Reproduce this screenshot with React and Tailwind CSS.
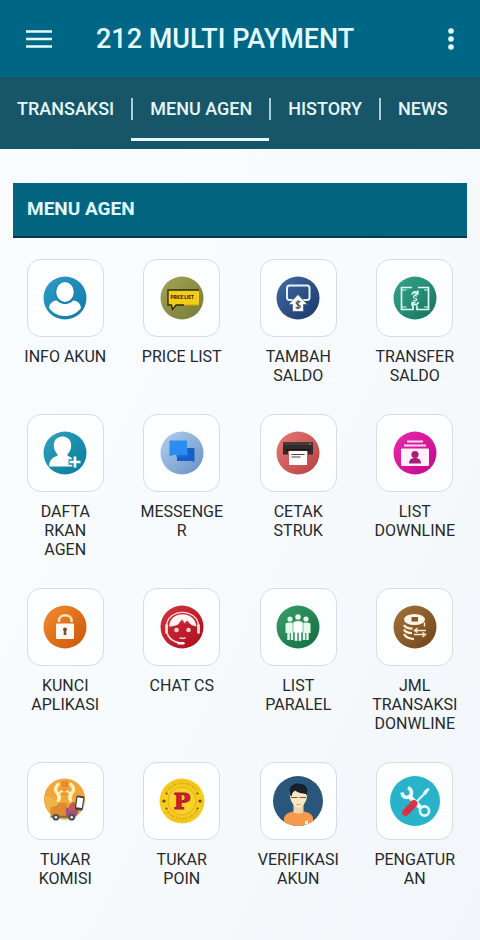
import React, { useState } from "react";

const tabs = ["TRANSAKSI", "MENU AGEN", "HISTORY", "NEWS"];

function Disc({ id, from, to, children }) {
  return (
    <svg viewBox="0 0 44 44" className="w-11 h-11" aria-hidden="true">
      <defs>
        <linearGradient id={id} x1="0" y1="0" x2="1" y2="1">
          <stop offset="0" stopColor={from} />
          <stop offset="1" stopColor={to} />
        </linearGradient>
      </defs>
      <circle cx="22" cy="22" r="21.5" fill={`url(#${id})`} />
      {children}
    </svg>
  );
}

function InfoIcon() {
  return (
    <Disc id="info" from="#2f9cc4" to="#0b7ba9">
      <path
        d="M6 32c.4-5 4.300-7.500 8-7.500 3.500 4.200 12.500 4.200 16 0 4 0 7.600 2.800 8 7.500-4 5.500-10 8-16 8S10 37.500 6 32z"
        fill="#fff"
      />
      <ellipse cx="22" cy="16.800" rx="9.800" ry="11.300" fill="#1480ab" />
      <ellipse cx="22" cy="16" rx="8.800" ry="10" fill="#fff" />
    </Disc>
  );
}

function PriceIcon() {
  return (
    <Disc id="price" from="#a3a552" to="#77793a">
      <path d="M8 14h31v15H16l-3.500 4.500L11.500 29H8z" fill="#f2cf16" />
      <path d="M39 14H8v15h3.500l1 4.500L16 29h8" fill="none" stroke="#2c2a0c" strokeWidth="1.300" />
      <path d="M24 29h15" stroke="#d2a512" strokeWidth="1" />
      <text x="10.500" y="23" fontFamily="Roboto, sans-serif" fontSize="4.500" fontWeight="900" fill="#38200c">
        PRICE LIST
      </text>
    </Disc>
  );
}

function TopUpIcon() {
  return (
    <Disc id="topup" from="#426aa3" to="#1c3768">
      <rect x="11" y="9.500" width="22.500" height="14.500" rx="2.500" fill="none" stroke="#e6f3fb" strokeWidth="2" />
      <path d="M22 18.500l9.500 10H27.500v7H16.500v-7h-4z" fill="#f4fbff" stroke="#2b4c80" strokeWidth=".6" />
      <path
        d="M24.300 26.200c-.6-1-4.200-1.200-4.200.8 0 2.200 4.200 1.200 4.200 3.500 0 2-3.600 2-4.500.6M22.100 24.200v9"
        fill="none"
        stroke="#4a4a3e"
        strokeWidth="1.200"
      />
    </Disc>
  );
}

function TransferIcon() {
  return (
    <Disc id="transfer" from="#36a58b" to="#16735f">
      <g fill="none" stroke="#dffaf2" strokeWidth="1.700">
        <path d="M19 11.500H8.500v22H20v-4" />
        <path d="M25 11.500h10.500v22H24v-4" />
        <path d="M8.500 14h5M31 14h4.500M8.500 31h5M31 31h4.500" strokeWidth="1" />
        <path d="M19 18.500c1-3 4-3.500 5.500-1.500M24.800 14.500v3.500h-3.300" />
        <path d="M25.500 26c-1 3-4 3.500-5.500 1.500M19.200 30v-3.500h3.300" />
        <path d="M24 20.300c-1-1-3.800-.8-3.600.7.200 1.700 3.500.8 3.500 2.500 0 1.400-2.900 1.400-3.700.4" strokeWidth="1.200" />
      </g>
    </Disc>
  );
}

function RegisterIcon() {
  return (
    <Disc id="register" from="#2fa3c0" to="#08799a">
      <path
        d="M19.500 5.500c5.300 0 8.700 3.800 8.700 9 0 3.800-1.600 6.600-3.600 8.500v2c4.600 1.600 7.400 3.500 7.900 10.500H6c.4-7 3.300-8.900 8.400-10.500v-2c-2-1.900-3.600-4.700-3.600-8.500 0-5.200 3.400-9 8.700-9z"
        fill="#fff"
      />
      <path d="M32 24.500v13M25.500 31h13" stroke="#108aab" strokeWidth="5.500" />
      <path d="M32 25.500v11M26.500 31h11" stroke="#fff" strokeWidth="2.600" />
    </Disc>
  );
}

function MessengerIcon() {
  return (
    <Disc id="messenger" from="#b4d2f0" to="#668fc3">
      <path d="M17 17h17.500v14l-3-1H17z" fill="#155fc7" />
      <path d="M9.500 9.500H27V24H13l-3.500 1.500z" fill="#2b8df0" />
      <path d="M16.500 24H27v-6l1.500 1v7H16.500z" fill="#1b6fdb" />
    </Disc>
  );
}

function PrintIcon() {
  return (
    <Disc id="print" from="#e87a75" to="#b63f42">
      <path d="M7 11h30v12.500h-5V19H12v4.500H7z" fill="#302a2b" />
      <path d="M7 11h30v3H7z" fill="#453b3c" />
      <path d="M33.500 11.500l2 1.500-2 1.500z" fill="#c65658" />
      <path d="M10 19h24" stroke="#15100f" strokeWidth="1.500" />
      <path d="M13 20h18v14H13z" fill="#fdfbfa" />
      <path d="M15.500 23.500h13M15.500 26h9" stroke="#4d4646" strokeWidth="1" />
    </Disc>
  );
}

function DownlineIcon() {
  return (
    <Disc id="downline" from="#e62baa" to="#c5068e">
      <path d="M14 10.500h16M11 14.500h22" stroke="#ffd9f2" strokeWidth="1.800" />
      <rect x="8" y="17.500" width="28" height="17.500" rx="1" fill="#fff1fa" />
      <circle cx="22" cy="23.500" r="3.600" fill="#a81c7c" />
      <path d="M16 32.500c0-4 2.500-5.500 6-5.500s6 1.500 6 5.500z" fill="#a81c7c" />
    </Disc>
  );
}

function LockIcon() {
  return (
    <Disc id="lock" from="#f28c30" to="#cc5507">
      <path d="M16 17v-1.500c0-7 12.500-7 12.500 0V17" fill="none" stroke="#ffe0b8" strokeWidth="2.600" />
      <rect x="13" y="18.500" width="18" height="15.500" rx="1" fill="#fffaf2" />
      <circle cx="22" cy="24.500" r="2" fill="#7d4b30" />
      <path d="M21 25h2l.4 5h-2.800z" fill="#7d4b30" />
    </Disc>
  );
}

function ChatCsIcon() {
  return (
    <Disc id="cs" from="#d23440" to="#ae0c1a">
      <path d="M6.500 22C6.500 2.500 38.500 2.500 38.500 22" fill="none" stroke="#ffdcdc" strokeWidth="1.400" />
      <path d="M9 21.500C10 5 35 5 36.500 21.500c-4.500-.5-7-2.500-8.800-5.500l-3.200 2.500-2.500-3-4 4c-3 1.500-6 2-9 2z" fill="#fff4f2" />
      <path d="M19 18l3-3.500 2.500 3.500 3-2.500 1 3.500z" fill="#cf2c35" />
      <path d="M6.500 20.500v7M38.500 20.500v7" stroke="#ffe0dd" strokeWidth="2.800" strokeLinecap="round" />
      <path d="M7 28c1.500 5.500 7 9 13.500 10" fill="none" stroke="#ffd9d7" strokeWidth="1.700" />
      <path d="M18.500 38.300h5" stroke="#fff" strokeWidth="2.400" strokeLinecap="round" />
      <circle cx="16.500" cy="25" r="2.300" fill="#ffd2cf" />
      <circle cx="28.500" cy="25" r="2.300" fill="#ffd2cf" />
      <path d="M19.500 32.800c2 .8 4 .8 6 0" fill="none" stroke="#ffc0bd" strokeWidth="1.700" />
    </Disc>
  );
}

function ParallelIcon() {
  return (
    <Disc id="parallel" from="#39a06c" to="#126b3d">
      <g fill="#e3fbea">
        <circle cx="14" cy="14" r="2.600" />
        <path d="M9.500 19c0-2 9-2 9 0v9h-1.300v7h-2.400v-7h-1v7h-2.500v-7H9.500z" />
        <circle cx="30" cy="14" r="2.600" />
        <path d="M25.500 19c0-2 9-2 9 0v9h-1.800v7h-2.400v-7h-1v7h-2.500v-7h-1.300z" />
      </g>
      <g fill="#fff" stroke="#3d9c6a" strokeWidth=".6">
        <circle cx="22" cy="12" r="3" />
        <path d="M17 18c0-3 10-3 10 0v9.500h-1.500V36h-3v-8h-1v8h-3v-8.500H17z" />
      </g>
    </Disc>
  );
}

function CoinsIcon() {
  return (
    <Disc id="coins" from="#a5733c" to="#6f431a">
      <ellipse cx="21.500" cy="14.500" rx="10.500" ry="5.500" fill="#fff5e5" />
      <rect x="18.500" y="12" width="6.500" height="4.500" fill="#7f5a34" />
      <g fill="none" stroke="#fff0dc" strokeWidth="2.200">
        <path d="M11 20c1 2.500 4 3.500 8.500 3.700" />
        <path d="M11 24.500c1 2.500 4 3.500 8 3.700" />
        <path d="M11 29c1.500 3 5 4.700 10 5" />
      </g>
      <path d="M31.500 17.500v4" stroke="#fff0dc" strokeWidth="1.500" />
      <path d="M22 25.500h11M21 29.500h10M24.500 23l-3 2.500 3 2M29.500 27.500l3 2-3 2.500" fill="none" stroke="#ffe8cb" strokeWidth="1.500" />
    </Disc>
  );
}

function KomisiIcon() {
  return (
    <svg viewBox="0 0 46 48" className="w-11 h-12" aria-hidden="true">
      <circle cx="22.500" cy="22" r="21.500" fill="#f3a53c" />
      <path d="M2 18c7 2 13 5 14 12l1 12C8 39 1 31 2 18z" fill="#efb646" />
      <g fill="none" stroke="#fff2bd" strokeWidth="3.600" strokeLinecap="round">
        <path d="M16 6.500c-4 3.500-3.500 7-.5 10 2.500 3 1.500 5.500.5 7" />
        <path d="M29 6.500c4 3.500 3.500 7 .5 10-2.500 3-1.500 5.500-.5 7" />
        <path d="M15.500 16.500l4.500-3M29.500 16.500l-4.500-3" strokeWidth="2" />
      </g>
      <path d="M20 4h5.500v5H20zM19.500 12h6M20.500 17h4" fill="#e58f31" stroke="#d98024" strokeWidth="1" />
      <path d="M8 31l8-3v-2h9v14H8z" fill="#dd8a30" />
      <path d="M24 31h14l-3 9H24z" fill="#a4517b" />
      <path d="M27 29l4-4 5 2-1 7h-8z" fill="#bd5e56" />
      <rect x="34" y="18.500" width="8.500" height="15" rx="1.500" transform="rotate(8 38 26)" fill="#42414b" />
      <rect x="35.300" y="20.500" width="6" height="10.500" transform="rotate(8 38 26)" fill="#fff" />
      <path d="M8 40.500h26" stroke="#716a67" strokeWidth="2" />
      <circle cx="13.500" cy="41" r="3.500" fill="#494a4e" />
      <circle cx="13.500" cy="41" r="1.500" fill="#ddd" />
      <circle cx="30" cy="41" r="3.500" fill="#494a4e" />
      <circle cx="30" cy="41" r="1.500" fill="#ddd" />
    </svg>
  );
}

function PoinIcon() {
  return (
    <svg viewBox="0 0 46 46" className="w-[46px] h-[46px]" aria-hidden="true">
      <circle cx="23" cy="23" r="22.500" fill="#f7cd1f" />
      <circle cx="23" cy="23" r="17.800" fill="none" stroke="#dcae1b" strokeWidth="2.400" strokeDasharray="1.500 1.500 2.500 1" />
      <circle cx="23" cy="23" r="20.500" fill="none" stroke="#edb90e" strokeWidth=".8" />
      <circle cx="23" cy="23" r="14" fill="#f9d22a" stroke="#d8a514" strokeWidth=".8" />
      <path d="M5.500 13v20M40.500 13v20" stroke="#f7cd1f" strokeWidth="5" />
      <g fill="#6e3d14">
        <circle cx="5" cy="23" r="1.600" />
        <circle cx="41" cy="23" r="1.600" />
        <circle cx="7.500" cy="15.500" r="1" />
        <circle cx="38.500" cy="15.500" r="1" />
        <circle cx="7.500" cy="30.500" r="1" />
        <circle cx="38.500" cy="30.500" r="1" />
      </g>
      <text
        x="23"
        y="30.500"
        textAnchor="middle"
        fontFamily="DejaVu Serif, serif"
        fontSize="22"
        fontWeight="700"
        fill="#d11f2b"
        stroke="#b0222a"
        strokeWidth="1.200"
      >
        P
      </text>
    </svg>
  );
}

function VerifikasiIcon() {
  return (
    <svg viewBox="0 0 52 52" className="w-13 h-13" aria-hidden="true">
      <clipPath id="face">
        <circle cx="26" cy="26" r="25" />
      </clipPath>
      <circle cx="26" cy="26" r="25" fill="#2a567b" />
      <g clipPath="url(#face)">
        <path d="M12 52V43c1-4 4-5.500 9-6.500h11c5 1 8 2.500 9 6.500v9z" fill="#f5994a" />
        <path d="M21.500 29h10v7.500c-1 3-9 3-10 0z" fill="#efd5ae" />
        <path d="M17.500 18c0-4 4-7 9-7s9 3 9 7l-1 6c-1 4-4.500 9-8 9s-7-5-8-9z" fill="#fbe6c4" />
        <path d="M17.500 18C17 11 21 8.500 26 8.500c7 0 10.500 4 9.500 10.500l-1.500 1.500V19c-4-.5-8-1-11-3.500-1.500 1.500-2.500 2-3 3.500v2c-1.500 0-2.300-1-2.500-3z" fill="#15202c" />
        <path d="M19 22.500h6M28 22.500h6" stroke="#6a5a48" strokeWidth="1.200" />
        <path d="M25 22.500h3M24.500 29.500h4" stroke="#c79b74" strokeWidth=".8" />
        <path d="M33 46.500l3-1.500v4.500h-3z" fill="#fff1d2" />
      </g>
    </svg>
  );
}

function ToolsIcon() {
  return (
    <svg viewBox="0 0 52 52" className="w-13 h-13" aria-hidden="true">
      <circle cx="26" cy="26" r="25" fill="#28b3cb" />
      <path d="M36.500 17.500L26 28.500" stroke="#d9f4f7" strokeWidth="2.400" />
      <path d="M39 13l-4.500 4 2 2.500 3.500-5z" fill="#e8fbfd" stroke="#e8fbfd" strokeWidth="1" />
      <path d="M20 21l13 13" stroke="#f2fdfe" strokeWidth="4.500" />
      <path d="M19 12.500c5 2.500 4.500 9.500-1 10-2.500 0-4.500-2-5-5" fill="none" stroke="#f2fdfe" strokeWidth="3.600" />
      <circle cx="35.500" cy="36" r="4.600" fill="#28b3cb" stroke="#e6fafc" strokeWidth="2.600" />
      <path d="M25 28.500L16.500 37.500" stroke="#d9364b" strokeWidth="7" strokeLinecap="round" />
      <path d="M23 29.500l-7 7.500M25.500 31L18.500 38.500" stroke="#a92539" strokeWidth=".9" />
    </svg>
  );
}

const menus = [
  { label: "INFO AKUN", Icon: InfoIcon },
  { label: "PRICE LIST", Icon: PriceIcon },
  { label: "TAMBAH\nSALDO", Icon: TopUpIcon },
  { label: "TRANSFER\nSALDO", Icon: TransferIcon },
  { label: "DAFTA\nRKAN\nAGEN", Icon: RegisterIcon },
  { label: "MESSENGE\nR", Icon: MessengerIcon },
  { label: "CETAK\nSTRUK", Icon: PrintIcon },
  { label: "LIST\nDOWNLINE", Icon: DownlineIcon },
  { label: "KUNCI\nAPLIKASI", Icon: LockIcon },
  { label: "CHAT CS", Icon: ChatCsIcon },
  { label: "LIST\nPARALEL", Icon: ParallelIcon },
  { label: "JML\nTRANSAKSI\nDONWLINE", Icon: CoinsIcon },
  { label: "TUKAR\nKOMISI", Icon: KomisiIcon },
  { label: "TUKAR\nPOIN", Icon: PoinIcon },
  { label: "VERIFIKASI\nAKUN", Icon: VerifikasiIcon },
  { label: "PENGATUR\nAN", Icon: ToolsIcon },
];

function MenuItem({ label, Icon }) {
  return (
    <button type="button" className="flex flex-col items-center justify-start gap-[10px] cursor-pointer">
      <span className="flex items-center justify-center w-[77px] h-[78px] rounded-[14px] border border-[#d5dce2] bg-[#fdfeff]">
        <Icon />
      </span>
      <span className="whitespace-pre-line text-center text-base leading-[19px] text-[#26292c]">{label}</span>
    </button>
  );
}

function App() {
  const [active, setActive] = useState("MENU AGEN");

  return (
    <div className="min-h-screen bg-linear-to-br from-[#fafdff] via-[#f7fbfe] to-[#f2f6fa] font-['Roboto',sans-serif]">
      <header className="flex items-center h-[77px] px-[26px] bg-[#006686] text-[#e6fbff]">
        <button type="button" aria-label="Menu" className="cursor-pointer">
          <svg viewBox="0 0 26 20" className="w-[26px] h-5" stroke="currentColor" strokeWidth="2.600">
            <path d="M0 2.500h26M0 10h26M0 17.500h26" />
          </svg>
        </button>
        <h1 className="flex-1 ml-11 text-[27px] leading-8 font-medium">212 MULTI PAYMENT</h1>
        <button type="button" aria-label="More" className="cursor-pointer">
          <svg viewBox="0 0 6 24" className="w-[6px] h-6" fill="currentColor">
            <circle cx="3" cy="4" r="2.800" />
            <circle cx="3" cy="12" r="2.800" />
            <circle cx="3" cy="20" r="2.800" />
          </svg>
        </button>
      </header>

      <nav className="flex h-[72px] bg-[#175669] text-[#e6f7f8]">
        {tabs.map((tab, i) => (
          <button
            key={tab}
            type="button"
            onClick={() => setActive(tab)}
            className="relative flex items-center h-16 text-lg font-medium cursor-pointer"
          >
            {i > 0 && <span className="w-[2px] h-[22px] bg-[#a9cdd5]" />}
            <span className="px-[17px]">{tab}</span>
            {active === tab && <span className="absolute left-0 right-0 bottom-0 h-[3px] bg-[#e6fbff]" />}
          </button>
        ))}
      </nav>

      <main className="px-[7px] pt-[34px] pb-10">
        <h2 className="mx-[6px] px-[14px] h-[55px] flex items-center bg-[#046581] border-b-2 border-[#05384a] text-[19px] font-bold text-[#e0fbff]">
          MENU AGEN
        </h2>
        <div className="mt-[21px] grid grid-cols-4 gap-y-[29px]">
          {menus.map((menu) => (
            <MenuItem key={menu.label} {...menu} />
          ))}
        </div>
      </main>
    </div>
  );
}

export default App;
